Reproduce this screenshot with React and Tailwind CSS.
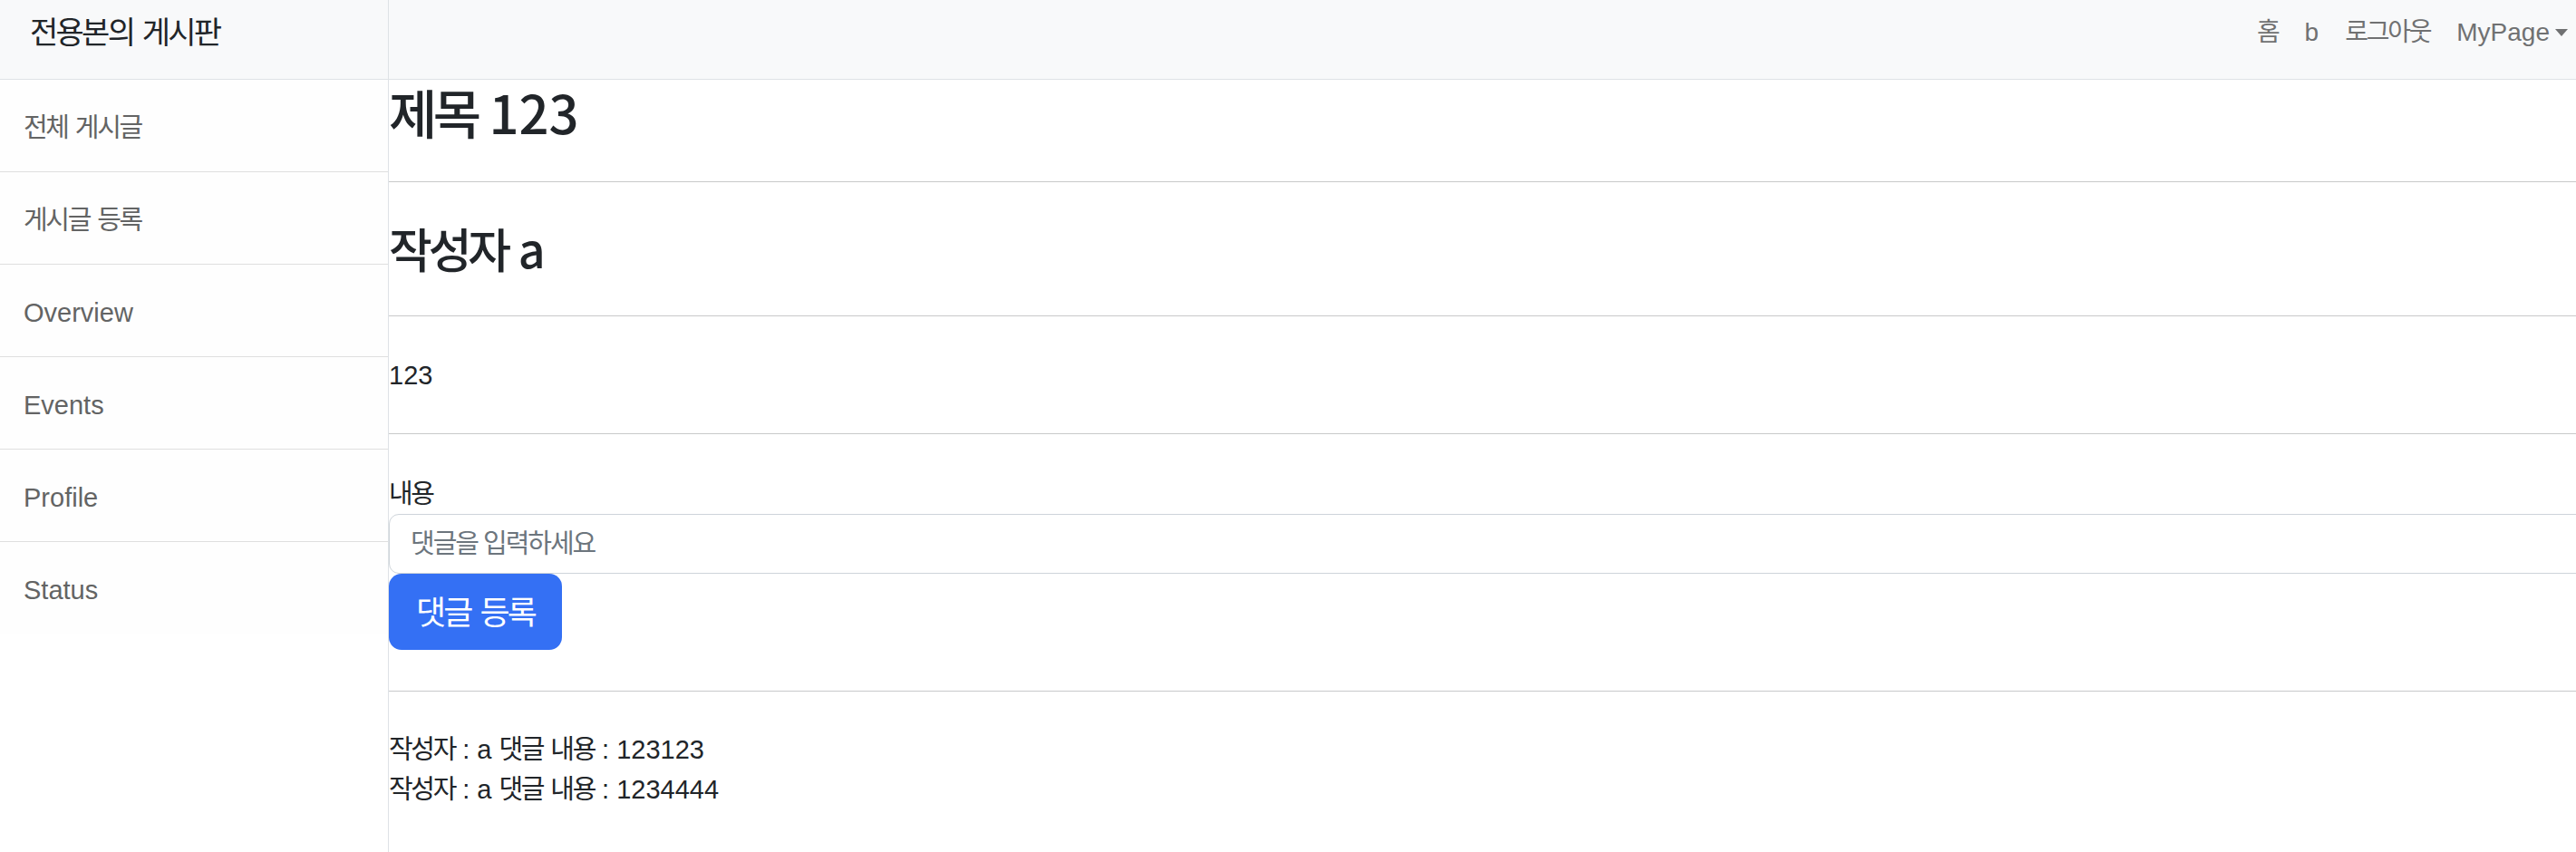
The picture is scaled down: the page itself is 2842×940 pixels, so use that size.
import React from "react";

// hangul in Noto CJK is wider than in the original; pull each word in,
// but keep the spaces outside the tracked span so they stay visible
const K = ({ children }) => {
  const words = String(children).split(" ");
  return (
    <span>
      {words.map((w, i) => (
        <React.Fragment key={i}>
          {i > 0 && " "}
          <span className="tracking-[-0.08em]">{w}</span>
        </React.Fragment>
      ))}
    </span>
  );
};

const menu = [
  { label: <K>전체 게시글</K> },
  { label: <K>게시글 등록</K> },
  { label: "Overview" },
  { label: "Events" },
  { label: "Profile" },
  { label: "Status" },
];

const comments = [
  { writer: "a", content: "123123" },
  { writer: "a", content: "1234444" },
];

const App = () => {
  return (
    <div className="flex min-h-[940px] w-[2842px] overflow-hidden bg-white font-['Liberation_Sans','Noto_Sans_CJK_KR',sans-serif] text-[#212529]">
      {/* Sidebar */}
      <aside className="w-[429px] shrink-0 border-r border-[#dee2e6]">
        <div className="h-[88px] bg-[#f8f9fa] border-b border-[#dee2e6] pl-[33px] pt-[10px] text-[34px] leading-[52px]">
          <K>전용본의 게시판</K>
        </div>
        <div className="flex flex-col">
          {menu.map((item, i) => (
            <a
              key={i}
              href="#"
              className="h-[102px] flex items-center pl-[26px] pt-[6px] bg-[#fefefe] text-[29px] text-[#636464] border-b border-[#dfdfdf] last:border-b-0"
            >
              <span>{item.label}</span>
            </a>
          ))}
        </div>
      </aside>

      <div className="flex-1 min-w-0">
        {/* Top bar */}
        <nav className="h-[88px] bg-[#f8f9fa] border-b border-[#dee2e6] flex justify-end items-start pt-[14px] pr-[9px] text-[28px] leading-[44px] text-[#707172]">
          <a href="#" className="px-[14.5px]">
            <K>홈</K>
          </a>
          <a href="#" className="px-[14.5px]">
            b
          </a>
          <a href="#" className="px-[14.5px]">
            <K>로그아웃</K>
          </a>
          <a href="#" className="pl-[14.5px] flex items-center">
            MyPage
            <span className="ml-[6px] inline-block border-t-[8px] border-t-current border-x-[7px] border-x-transparent"></span>
          </a>
        </nav>

        {/* Post */}
        <div>
          <h2 className="text-[58px] leading-[70px] font-medium font-['Noto_Sans_CJK_KR',sans-serif]">
            <K>제목</K> 123
          </h2>
          <hr className="mt-[42px] border-[#c8c9ca]" />

          <h3 className="mt-[42px] text-[52px] leading-[62px] font-medium font-['Noto_Sans_CJK_KR',sans-serif]">
            <K>작성자</K> a
          </h3>
          <hr className="mt-[43px] border-[#c8c9ca]" />

          <p className="mt-[43px] text-[29px] leading-[44px]">123</p>
          <hr className="mt-[42px] border-[#c8c9ca]" />

          <label className="block mt-[44px] text-[29px] leading-[44px]">
            <K>내용</K>
          </label>
          <input
            type="text"
            placeholder="댓글을 입력하세요"
            className="block w-[calc(100%+12px)] h-[66px] rounded-[11px] border border-[#ced4da] pl-[23px] text-[29px] tracking-[-0.07em] placeholder:text-[#6c757d] outline-none"
          />
          <button className="h-[84px] px-[30px] pt-[3px] rounded-[14px] bg-[#3470f4] text-white text-[36px] leading-[54px]">
            <K>댓글 등록</K>
          </button>
          <hr className="mt-[45px] border-[#c8c9ca]" />

          {/* Comments */}
          <div className="mt-[42px] text-[29px] leading-[44px]">
            {comments.map((c, i) => (
              <div key={i}>
                <K>작성자</K> : {c.writer} <K>댓글 내용</K> : {c.content}
              </div>
            ))}
          </div>
        </div>
      </div>
    </div>
  );
};

export default App;
